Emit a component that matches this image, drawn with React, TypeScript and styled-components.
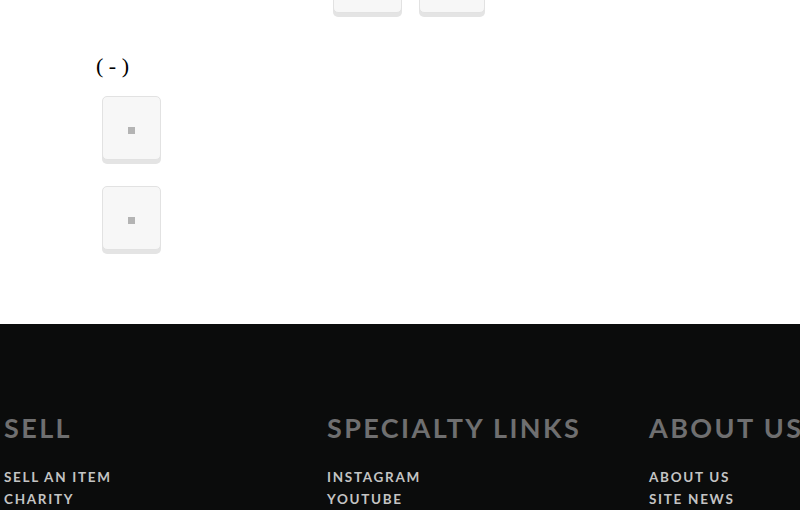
import React from 'react';
import styled, { createGlobalStyle } from 'styled-components';

const GlobalStyle = createGlobalStyle`
  html, body {
    margin: 0;
    padding: 0;
    background: #ffffff;
  }
`;

const Page = styled.div`
  display: flex;
  flex-direction: column;
  width: 800px;
  overflow: hidden;
`;

const Content = styled.div`
  display: flex;
  flex-direction: column;
  height: 324px;
`;

const TopRow = styled.div`
  display: flex;
  gap: 17px;
  padding-left: 333px;
  margin-top: -47px;
`;

const KeyButton = styled.button<{ $w?: number; $h?: number }>`
  display: flex;
  align-items: center;
  justify-content: center;
  box-sizing: border-box;
  width: ${(p) => p.$w ?? 59}px;
  height: ${(p) => p.$h ?? 64}px;
  padding: 4px 0 0;
  background: #f7f7f7;
  border: 1px solid #e2e2e2;
  border-radius: 5px;
  box-shadow: 0 4px 0 #e4e4e4;
  cursor: pointer;
`;

const Dot = styled.span`
  display: block;
  width: 7px;
  height: 7px;
  background: #b4b4b4;
`;

const Counter = styled.div`
  margin: 40px 0 0 96px;
  font-family: 'Liberation Serif', serif;
  font-size: 22px;
  line-height: 25px;
  color: #000;
`;

const Stack = styled.div`
  display: flex;
  flex-direction: column;
  gap: 26px;
  margin: 18px 0 0 102px;
`;

const Footer = styled.footer`
  background: #0b0c0c;
  height: 186px;
  padding: 89px 0 0 4px;
  box-sizing: border-box;
  display: grid;
  grid-template-columns: 323px 322px 323px;
  white-space: nowrap;
`;

const Column = styled.div`
  display: flex;
  flex-direction: column;
`;

const Heading = styled.h3`
  margin: 0 0 23px;
  font-family: Lato, 'Open Sans', sans-serif;
  font-weight: 700;
  font-size: 27px;
  line-height: 30px;
  letter-spacing: 2.4px;
  color: #6f6f70;
`;

const LinkItem = styled.a`
  font-family: Lato, 'Open Sans', sans-serif;
  font-weight: 700;
  font-size: 13.5px;
  line-height: 22px;
  letter-spacing: 1.7px;
  color: #c4c4c4;
  text-decoration: none;
`;

const columns = [
  { title: 'SELL', links: ['SELL AN ITEM', 'CHARITY'] },
  { title: 'SPECIALTY LINKS', links: ['INSTAGRAM', 'YOUTUBE'] },
  { title: 'ABOUT US', links: ['ABOUT US', 'SITE NEWS'] },
];

export default function App() {
  return (
    <>
      <GlobalStyle />
      <Page>
        <Content>
          <TopRow>
            <KeyButton $w={69} $h={60} />
            <KeyButton $w={66} $h={60} />
          </TopRow>
          <Counter>( - )</Counter>
          <Stack>
            <KeyButton>
              <Dot />
            </KeyButton>
            <KeyButton>
              <Dot />
            </KeyButton>
          </Stack>
        </Content>
        <Footer>
          {columns.map((col) => (
            <Column key={col.title}>
              <Heading>{col.title}</Heading>
              {col.links.map((l) => (
                <LinkItem key={l} href="#">
                  {l}
                </LinkItem>
              ))}
            </Column>
          ))}
        </Footer>
      </Page>
    </>
  );
}
